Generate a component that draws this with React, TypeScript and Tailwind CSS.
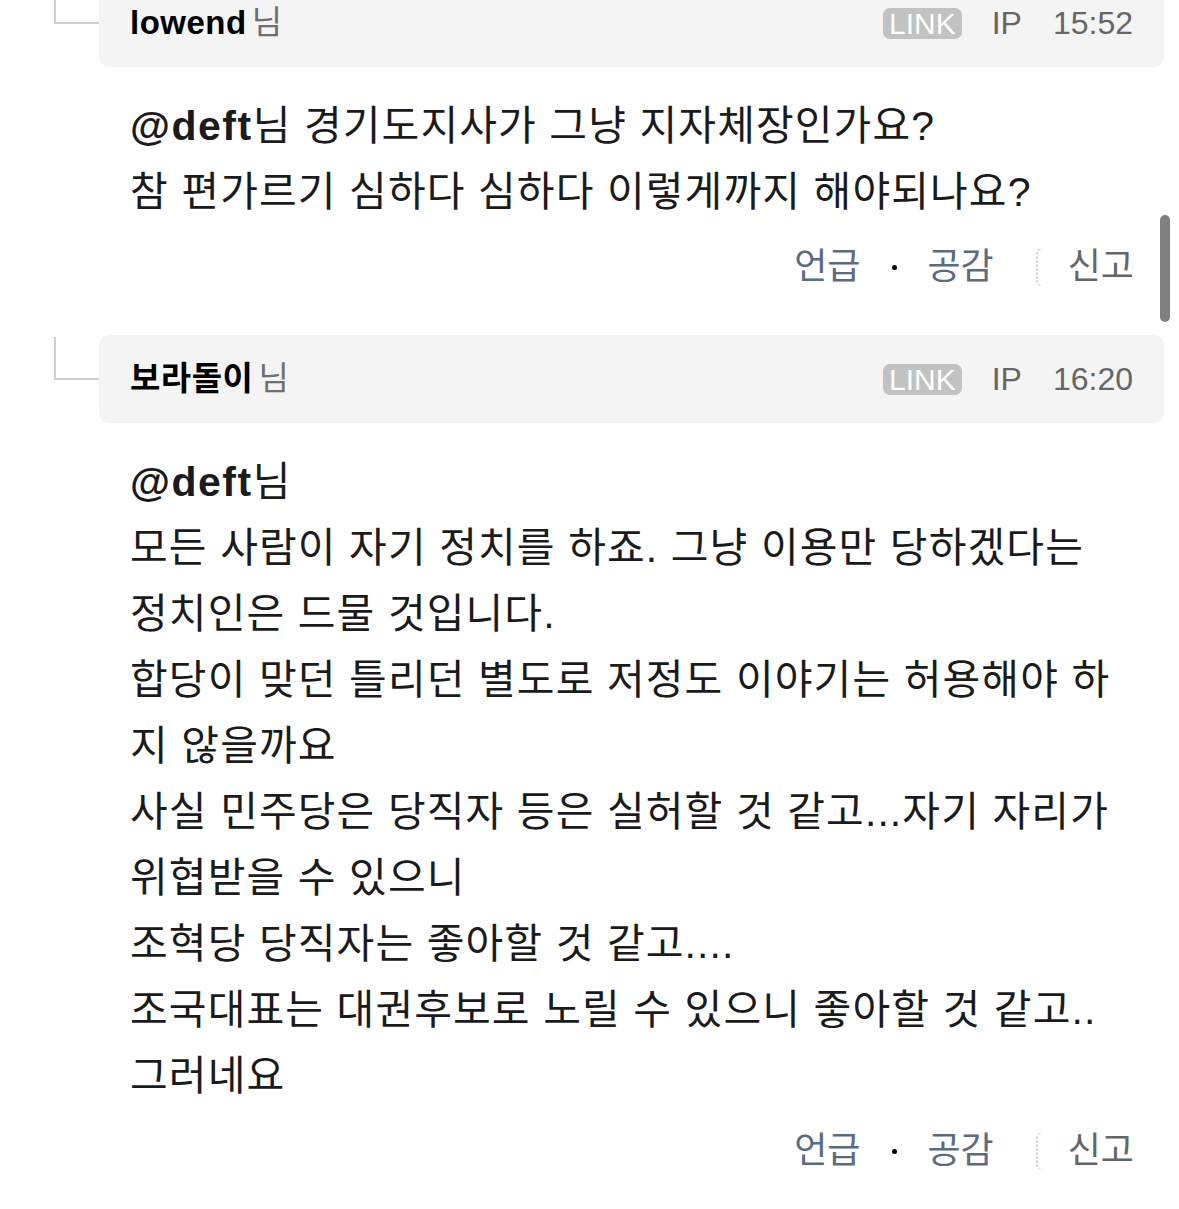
import React from 'react';

interface Comment {
  name: string;
  time: string;
  lines: string[];
}

const comments: Comment[] = [
  {
    name: 'lowend',
    time: '15:52',
    lines: [' 경기도지사가 그냥 지자체장인가요?', '참 편가르기 심하다 심하다 이렇게까지 해야되나요?'],
  },
  {
    name: '보라돌이',
    time: '16:20',
    lines: [
      '',
      '모든 사람이 자기 정치를 하죠. 그냥 이용만 당하겠다는',
      '정치인은 드물 것입니다.',
      '합당이 맞던 틀리던 별도로 저정도 이야기는 허용해야 하',
      '지 않을까요',
      '사실 민주당은 당직자 등은 실허할 것 같고...자기 자리가',
      '위협받을 수 있으니',
      '조혁당 당직자는 좋아할 것 같고....',
      '조국대표는 대권후보로 노릴 수 있으니 좋아할 것 같고..',
      '그러네요',
    ],
  },
];

const font = { fontFamily: '"Liberation Sans", "Noto Sans CJK KR", sans-serif' };

function CommentBlock({ c, first }: { c: Comment; first: boolean }) {
  return (
    <div className={first ? '-mt-[21px]' : 'mt-[43px]'}>
      <div className="flex">
        <div className="ml-[54px] mt-[2px] h-[43px] w-[45px] border-l-2 border-b-2 border-[#cfcfcf]" />
        <div className="mr-[15px] flex h-[88px] flex-1 items-center justify-between rounded-[10px] bg-[#f4f4f4] pl-[31px] pr-[31px]">
          <div className="flex items-baseline text-[33px] tracking-[0.5px]">
            <span className="font-bold text-black">{c.name}</span>
            <span className="ml-[5px] text-[#6f6f6f]">님</span>
          </div>
          <div className="flex items-center text-[32px] text-[#666]">
            <span className="rounded-[7px] bg-[#c2c2c2] px-[6px] text-[30px] leading-[31px] text-white">LINK</span>
            <span className="ml-[30px]">IP</span>
            <span className="ml-[31px]">{c.time}</span>
          </div>
        </div>
      </div>

      <div className="pl-[130px] pt-[26px] text-[41px] leading-[66px] tracking-[1.1px] text-[#1b1b1b]">
        {c.lines.map((l, i) => (
          <div key={i} className="whitespace-pre">
            {i === 0 ? (
              <>
                <span className="text-[41px] font-bold tracking-[1.5px]">@deft</span>
                <span>님</span>
                {l}
              </>
            ) : (
              l
            )}
          </div>
        ))}
      </div>

      <div className="mt-[17px] flex h-[50px] items-center justify-end pr-[45px] text-[36px]">
        <span className="text-[#5b6b82]">언급</span>
        <span className="mx-[31px] h-[5px] w-[5px] rounded-full bg-black" />
        <span className="text-[#5b6b82]">공감</span>
        <span className="ml-[42px] mr-[26px] h-[38px] w-[6px] rounded-l-full border-l-2 border-dotted border-[#c8c8c8]" />
        <span className="text-[#666]">신고</span>
      </div>
    </div>
  );
}

export default function App() {
  return (
    <div className="relative h-[1209px] w-[1179px] overflow-hidden bg-white" style={font}>
      {comments.map((c, i) => (
        <CommentBlock key={i} c={c} first={i === 0} />
      ))}
      <div className="absolute left-[1160px] top-[215px] h-[107px] w-[10px] rounded-full bg-[#808080]" />
    </div>
  );
}
